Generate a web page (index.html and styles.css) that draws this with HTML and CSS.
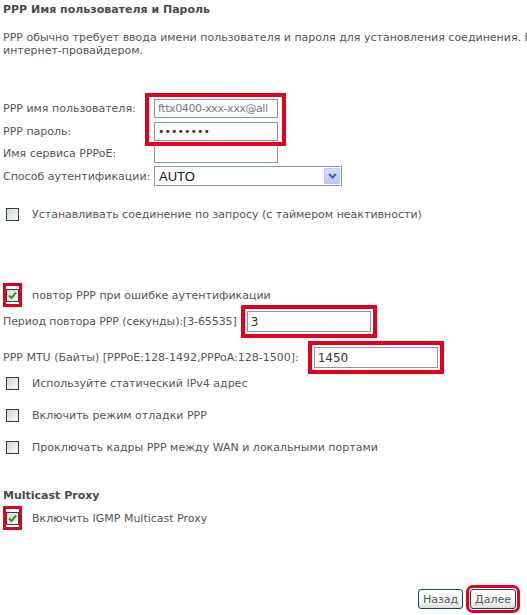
FILE: index.html
```html
<!DOCTYPE html>
<html lang="ru">
<head>
  <meta charset="UTF-8" />
  <meta name="viewport" content="width=device-width, initial-scale=1.0" />
  <title>PPP Имя пользователя и Пароль</title>
  <link rel="stylesheet" href="styles.css">
</head>
<body>
  <div class="page">
    <h1 class="title">PPP Имя пользователя и Пароль</h1>
    <p class="intro">PPP обычно требует ввода имени пользователя и пароля для установления соединения. В поле ниже введите имя пользователя и пароль, предоставленные вашим<br>интернет-провайдером.</p>

    <div class="login-grid">
      <label for="user">PPP имя пользователя:</label>
      <label for="pass">PPP пароль:</label>
      <div class="login-pair">
        <input type="text" id="user" class="field field-gray" value="fttx0400-xxx-xxx@all">
        <input type="password" id="pass" class="field" value="12345678">
      </div>

      <label for="service">Имя сервиса PPPoE:</label>
      <input type="text" id="service" class="field">

      <label>Способ аутентификации:</label>
      <div class="select">
        <span>AUTO</span>
        <span class="select-btn">
          <svg width="9" height="6" viewBox="0 0 9 6"><path d="M1 1 L4.5 4.5 L8 1" fill="none" stroke="#4d6185" stroke-width="2"/></svg>
        </span>
      </div>
    </div>

    <div class="check-row row-demand">
      <span class="cb"></span>
      <span>Устанавливать соединение по запросу (с таймером неактивности)</span>
    </div>

    <div class="check-row row-retry">
      <span class="cb checked boxed">
        <svg width="11" height="11" viewBox="0 0 11 11"><path d="M2 5.5 L4.5 8 L9 2.5" fill="none" stroke="#21a121" stroke-width="2"/></svg>
      </span>
      <span>повтор PPP при ошибке аутентификации</span>
    </div>

    <div class="field-row row-period">
      <label for="period">Период повтора PPP (секунды):[3-65535]</label>
      <input type="text" id="period" class="field field-wide marked" value="3">
    </div>

    <div class="field-row row-mtu">
      <label for="mtu">PPP MTU (Байты) [PPPoE:128-1492,PPPoA:128-1500]:</label>
      <input type="text" id="mtu" class="field field-wide marked" value="1450">
    </div>

    <div class="check-row row-first">
      <span class="cb"></span>
      <span>Используйте статический IPv4 адрес</span>
    </div>
    <div class="check-row row-next">
      <span class="cb"></span>
      <span>Включить режим отладки PPP</span>
    </div>
    <div class="check-row row-next">
      <span class="cb"></span>
      <span>Проключать кадры PPP между WAN и локальными портами</span>
    </div>

    <h2 class="title title-multicast">Multicast Proxy</h2>
    <div class="check-row row-igmp">
      <span class="cb checked boxed focus">
        <svg width="11" height="11" viewBox="0 0 11 11"><path d="M2 5.5 L4.5 8 L9 2.5" fill="none" stroke="#21a121" stroke-width="2"/></svg>
      </span>
      <span>Включить IGMP Multicast Proxy</span>
    </div>

    <div class="actions">
      <button type="button" class="btn">Назад</button>
      <button type="button" class="btn marked-btn">Далее</button>
    </div>
  </div>
</body>
</html>
```

FILE: styles.css
```css
html, body {
  margin: 0;
  padding: 0;
  background-color: #fff;
  overflow: hidden;
}
body {
  font-family: 'DejaVu Sans', Verdana, sans-serif;
  font-size: 11px;
  line-height: 13px;
  color: #555;
}

.page {
  width: 527px;
  height: 615px;
  padding: 3px 0 0 3px;
  box-sizing: border-box;
}

.title {
  margin: 0;
  font-size: 11px;
  line-height: 13px;
  font-weight: bold;
  color: #4a4a4a;
}

.intro {
  margin: 15px 0 0 0;
  white-space: nowrap;
  overflow: hidden;
}

/* login block */
.login-grid {
  display: grid;
  grid-template-columns: 151px auto;
  row-gap: 3px;
  align-items: center;
  justify-items: start;
  margin-top: 42px;
}
.login-pair {
  grid-column: 2;
  grid-row: 1 / 3;
  display: flex;
  flex-direction: column;
  gap: 4px;
  position: relative;
}
.login-pair::after {
  content: "";
  position: absolute;
  top: -6px;
  left: -9px;
  right: -8px;
  bottom: -5px;
  border: 4px solid #e2001a;
  pointer-events: none;
}
.field {
  box-sizing: border-box;
  width: 124px;
  height: 19px;
  margin: 0;
  padding: 0 3px;
  border: 1px solid #8799a9;
  font-family: 'DejaVu Sans', Verdana, sans-serif;
  font-size: 11px;
  color: #333;
  background: #fff;
}
.field-gray {
  color: #777;
  letter-spacing: -0.4px;
}
.field-wide {
  height: 21px;
  font-size: 12px;
}
.select {
  box-sizing: border-box;
  width: 188px;
  height: 20px;
  border: 1px solid #8799a9;
  display: flex;
  align-items: center;
  justify-content: space-between;
  padding: 0 1px 0 4px;
  font-family: 'Liberation Sans', Arial, sans-serif;
  font-size: 13px;
  color: #111;
}
.select-btn {
  width: 16px;
  height: 16px;
  border: 1px solid #b7c9f3;
  border-radius: 2px;
  box-sizing: border-box;
  background: linear-gradient(#d3e0fd, #b5c9f5);
  display: flex;
  align-items: center;
  justify-content: center;
}

/* red annotation marks */
.marked {
  outline: 4px solid #e2001a;
  outline-offset: 2px;
}
.boxed {
  position: relative;
}
.boxed::after {
  content: "";
  position: absolute;
  top: -7px;
  left: -4px;
  right: -4px;
  bottom: -6px;
  border: 3px solid #e2001a;
}

/* checkboxes */
.check-row {
  display: flex;
  align-items: center;
  gap: 13px;
  padding-left: 3px;
  height: 13px;
}
.cb {
  box-sizing: border-box;
  width: 13px;
  height: 13px;
  border: 1px solid #2c3e52;
  background: linear-gradient(135deg, #d9d9d2, #f7f7f4);
  display: flex;
  align-items: center;
  justify-content: center;
  flex-shrink: 0;
}
.focus::before {
  content: "";
  position: absolute;
  left: 0;
  right: 0;
  bottom: -4px;
  border-bottom: 1px dotted #222;
}

.row-demand { margin-top: 22px; }
.row-retry { margin-top: 68px; }
.row-first { margin-top: 9px; }
.row-next { margin-top: 19px; }
.row-igmp { margin-top: 10px; }

.field-row {
  display: flex;
  align-items: center;
}
.row-period {
  margin-top: 9px;
  gap: 10px;
}
.row-period label {
  letter-spacing: -0.1px;
}
.row-mtu {
  margin-top: 15px;
  gap: 15px;
}

.title-multicast {
  margin-top: 35px;
}

/* buttons */
.actions {
  display: flex;
  justify-content: flex-end;
  gap: 7px;
  padding-right: 11px;
  margin-top: 64px;
}
.btn {
  height: 20px;
  padding: 0 4px;
  border: 1px solid #1e3f66;
  border-radius: 3px;
  background: linear-gradient(#fff, #f4f4f0 70%, #dcdcd4);
  font-family: 'DejaVu Sans', Verdana, sans-serif;
  font-size: 11px;
  color: #4f5866;
}
.marked-btn {
  outline: 3px solid #e2001a;
  outline-offset: 1px;
}
```
